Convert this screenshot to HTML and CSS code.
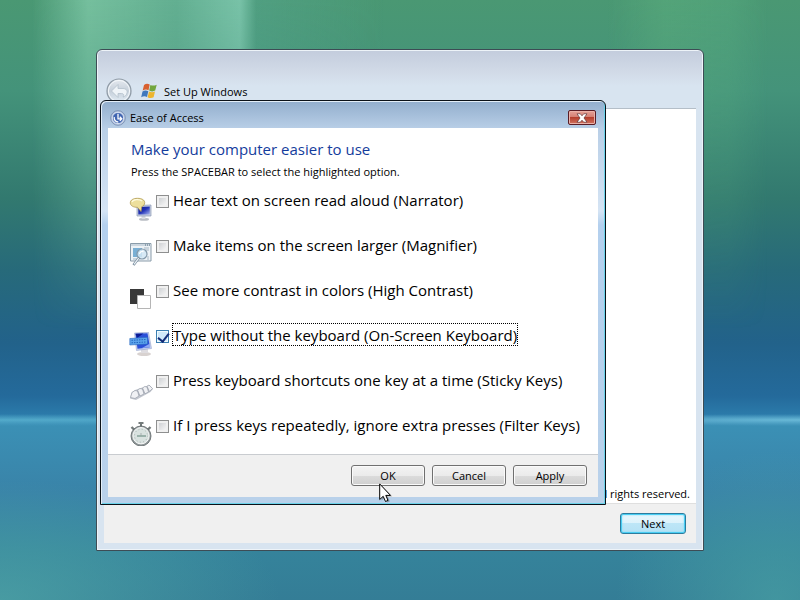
FILE: index.html
```html
<!DOCTYPE html>
<html lang="en">
<head>
    <meta charset="UTF-8">
    <title>Set Up Windows</title>
    <link rel="stylesheet" href="styles.css">
</head>
<body>
    <main class="desktop">
        <section class="setup">
            <header class="setup-header">
                <button type="button" class="back" aria-label="Back" disabled>
                    <svg viewBox="0 0 26 26" width="26" height="26">
                        <defs>
                            <linearGradient id="orb" x1="0" y1="0" x2="0" y2="1">
                                <stop offset="0" stop-color="#e6eaf0"/>
                                <stop offset=".5" stop-color="#c6d0da"/>
                                <stop offset="1" stop-color="#e4eef6"/>
                            </linearGradient>
                        </defs>
                        <circle cx="13" cy="13" r="12" fill="url(#orb)" stroke="#8f9ba6" stroke-width="1.2"/>
                        <circle cx="13" cy="13" r="10.6" fill="none" stroke="#f4f8fb" stroke-width="1"/>
                        <path d="M5.500 13l6.500-6.500v4h5c3.500 0 4.500 2.500 4 4.500-.6 2.500-2 3.500-4 4 1.500-2 .5-3.500-1.500-3.500H12v4z" fill="#eff4f8" stroke="#b3bfca" stroke-width=".8"/>
                    </svg>
                </button>
                <svg class="flag" viewBox="0 0 16 16" width="16" height="16">
                    <path d="M3 2C5 .3 7 .5 8.700 1.500L7.500 7.300C5.600 6.300 3.800 6.400 1.700 7.600z" fill="#d8602f"/>
                    <path d="M9.400 1.900c2 1 4 .9 6.300-.2l-1.500 5.900c-2 1.200-4 1-6-.1z" fill="#72a63e"/>
                    <path d="M1.500 8.400c2-1.200 4-1.200 5.800-.2L6 14C4.200 13 2.200 13 .2 14.300z" fill="#3f78bd"/>
                    <path d="M8 8.500c2 1 4 1.100 6 0l-1.400 5.800c-2 1.100-4 1.100-6-.1z" fill="#edb52f"/>
                </svg>
                <h1>Set Up Windows</h1>
            </header>
            <div class="setup-page">
                <p>All rights reserved.</p>
            </div>
            <footer class="setup-footer">
                <button type="button" class="btn btn-default">Next</button>
            </footer>
        </section>

        <form class="dialog">
            <header class="titlebar">
                <svg viewBox="0 0 16 16" width="16" height="16">
                    <circle cx="8" cy="8" r="7.300" fill="#bccbe4" stroke="#7186ab" stroke-width=".8"/>
                    <circle cx="8" cy="8" r="5.600" fill="#4165b1" stroke="#e4ecf8" stroke-width=".8"/>
                    <path d="M8 3.800v5h3.500M9.800 6.800l2 2-2 2M4.300 7a4 4 0 0 0 4 5" fill="none" stroke="#fff" stroke-width="1.300"/>
                </svg>
                <h2>Ease of Access</h2>
                <button type="button" class="close" aria-label="Close">
                    <svg viewBox="0 0 12 10" width="12" height="10">
                        <path d="M1 .8h3.300L6 2.800 7.700.8H11L8 5l3 4.200H7.700L6 7.200l-1.700 2H1L4 5z" fill="#fff" stroke="#5b3438" stroke-width=".7"/>
                    </svg>
                </button>
            </header>
            <div class="dialog-page">
                <h3>Make your computer easier to use</h3>
                <p>Press the SPACEBAR to select the highlighted option.</p>
                <ul class="options">
                    <li>
                        <svg viewBox="0 0 24 24" width="24" height="24">
                            <defs>
                                <linearGradient id="screen" x1="0" y1="0" x2="1" y2="1">
                                    <stop offset="0" stop-color="#101a8e"/>
                                    <stop offset=".5" stop-color="#2434b8"/>
                                    <stop offset="1" stop-color="#a9b6ee"/>
                                </linearGradient>
                            </defs>
                            <ellipse cx="15" cy="22.200" rx="5" ry="1.500" fill="#b9bdc4"/>
                            <path d="M12.500 18h4v4h-4z" fill="#d9dbe0"/>
                            <path d="M8 8.500l14-.5v11H8z" fill="#c8d0e0" stroke="#8b98b4" stroke-width=".7"/>
                            <path d="M9.300 10l11.500-.5v8H9.300z" fill="url(#screen)"/>
                            <path d="M8.500 1.300c4.500 0 7.200 1.800 7.200 4.400 0 2-1.200 3.200-3 4l-.7 4.800-3.500-4.200C4.200 10.400 1.300 8.600 1.300 5.800c0-2.800 3-4.500 7.200-4.500z" fill="#eddf9c" stroke="#b09a54" stroke-width=".8"/>
                            <path d="M3 5c1-2.500 7-3.500 10-1" fill="none" stroke="#fffbe0" stroke-width="1.200"/>
                        </svg>
                        <input type="checkbox" id="narrator">
                        <label for="narrator">Hear text on screen read aloud (Narrator)</label>
                    </li>
                    <li>
                        <svg viewBox="0 0 24 24" width="24" height="24">
                            <path d="M1.500 1.500h20.500v17.500H1.500z" fill="#edf2f6" stroke="#8a9caa"/>
                            <path d="M2 2h19.500v2H2z" fill="#cbd6df"/>
                            <path d="M16 3h1M18 3h1M20 3h1" stroke="#526c80"/>
                            <path d="M4 6h9v9H4z" fill="#79afd4"/>
                            <path d="M15 6h5M16 8h4M4 17h6M18 15h2M18 17h2" stroke="#a6b7c4"/>
                            <circle cx="13" cy="12" r="5" fill="#d2e8f5" fill-opacity=".85" stroke="#8499aa" stroke-width="1.200"/>
                            <path d="M10.500 12c.5-2 2-3 4-2.500" fill="none" stroke="#fff" stroke-width="1.300"/>
                            <path d="M10 15.800L4.500 23" stroke="#718698" stroke-width="2.500"/>
                            <path d="M9.700 16.200L5 22.400" stroke="#eef3f7" stroke-width="1.200"/>
                        </svg>
                        <input type="checkbox" id="magnifier">
                        <label for="magnifier">Make items on the screen larger (Magnifier)</label>
                    </li>
                    <li>
                        <svg viewBox="0 0 24 24" width="24" height="24">
                            <path d="M1 2h14v15H1z" fill="#393939"/>
                            <path d="M8.500 8.500h13v13h-13z" fill="#fff" stroke="#b5b5b5"/>
                        </svg>
                        <input type="checkbox" id="contrast">
                        <label for="contrast">See more contrast in colors (High Contrast)</label>
                    </li>
                    <li>
                        <svg viewBox="0 0 24 24" width="24" height="24">
                            <ellipse cx="15" cy="22" rx="7" ry="2" fill="#d8d2d0"/>
                            <path d="M12 17h7v4h-7z" fill="#dedce0"/>
                            <path d="M5.500 1L19.500.3l3 16.200-15 2z" fill="#c1cced" stroke="#9aa8cf" stroke-width=".6"/>
                            <path d="M6.500 1.800l12-.5 2.500 14-12.500 1.500z" fill="#2b50d8"/>
                            <path d="M6.500 1.800l8-.3L8 6z" fill="#0b1b94"/>
                            <path d="M.8 6.500L18.500 5.300V12l-17.700 1z" fill="#5ca4ec" stroke="#2667bd" stroke-width=".6"/>
                            <path d="M2.500 8.300l14.500-.8M2.500 10.800l14.500-.8" stroke="#2466c0" stroke-dasharray="1.500 1"/>
                            <path d="M13 16l8-4.500v3.700z" fill="#8ea9f3"/>
                        </svg>
                        <input type="checkbox" id="osk" checked>
                        <label for="osk" class="focused">Type without the keyboard (On-Screen Keyboard)</label>
                    </li>
                    <li>
                        <svg viewBox="0 0 24 24" width="24" height="24">
                            <path d="M1 21.500l1.500-6L6 13l14.500-5 3.500 4-2.500 3L7 23z" fill="#c3c7cf"/>
                            <path d="M3 15.500l3-2 2.500.5 1.500 5-4 2.500-4.500-1zM8.500 13l2.500-1.500 2.500.5 1.500 5-4 2zM13.500 11l2.300-1.500 2.200.5 1.500 5-3.500 1.800zM18 9.300l2-1.300 3.500 3.500-3 3z" fill="#f0f1f4" stroke="#9a9fab" stroke-width=".7"/>
                        </svg>
                        <input type="checkbox" id="sticky">
                        <label for="sticky">Press keyboard shortcuts one key at a time (Sticky Keys)</label>
                    </li>
                    <li>
                        <svg viewBox="0 0 24 24" width="24" height="24">
                            <path d="M2.500 5l2.500 2.500M21.500 5L19 7.500" stroke="#747b7b" stroke-width="2.400"/>
                            <path d="M9.500 1h5M12 1v4" stroke="#747b7b" stroke-width="2"/>
                            <circle cx="12" cy="14" r="10" fill="#90989a" stroke="#5d6566" stroke-width=".8"/>
                            <circle cx="12" cy="13.700" r="8.200" fill="#d9e2e0" stroke="#f8f8f8"/>
                            <circle cx="12" cy="13.700" r="6.500" fill="none" stroke="#a9b4b2" stroke-dasharray="1 2.400"/>
                            <path d="M8 14h9" stroke="#5d8277"/>
                            <path d="M12 14v-3" stroke="#9aa5a3" stroke-width=".8"/>
                        </svg>
                        <input type="checkbox" id="filter">
                        <label for="filter">If I press keys repeatedly, ignore extra presses (Filter Keys)</label>
                    </li>
                </ul>
            </div>
            <footer class="dialog-footer">
                <button type="button" class="btn">OK</button>
                <button type="button" class="btn">Cancel</button>
                <button type="button" class="btn">Apply</button>
            </footer>
        </form>

        <svg class="cursor" viewBox="0 0 14 21" width="14" height="21">
            <path d="M2.500 2.500v15l3.500-3 2.300 5 2.500-1-2-5h4.500z" fill="#000" opacity=".25"/>
            <path d="M.7.900v15.600l3.500-3.200 2.300 5.200 2.500-1.100-2.200-5h4.700z" fill="#fff" stroke="#000"/>
        </svg>
    </main>
</body>
</html>
```
FILE: styles.css
```css
* {
    box-sizing: border-box;
}

body {
    margin: 0;
    font-family: "Open Sans", "Noto Sans", sans-serif;
    font-size: 11px;
    color: #000;
}

h1, h2, h3, p, ul {
    margin: 0;
    padding: 0;
    font-size: 11px;
    font-weight: normal;
}

svg {
    display: block;
    flex: none;
}

.desktop {
    position: relative;
    display: grid;
    place-items: center;
    min-height: 100vh;
    background:
        radial-gradient(ellipse 70% 1% at 0 70%, rgba(100, 190, 215, 0.7), transparent),
        radial-gradient(ellipse 40% 1% at 100% 70%, rgba(120, 200, 225, 0.8), transparent),
        radial-gradient(ellipse 35% 20% at 0 100%, rgba(85, 175, 170, 0.6), transparent),
        radial-gradient(ellipse 20% 25% at 97% 100%, rgba(75, 165, 165, 0.6), transparent),
        linear-gradient(#4a9873 0, #44937a 15%, #32796f 33%, #276a7a 45%, #22628a 57%, #246a9b 66%, #2d7fae 70%, #3b90b5 71%, #3983a8 82%, #35839b 92%, #347d96 100%);
}

/* vertical light beams in the upper part of the wallpaper */
.desktop::before {
    content: "";
    position: absolute;
    inset: 0 0 45%;
    background: linear-gradient(90deg, transparent 4%, rgba(140, 212, 180, 0.65) 11%, rgba(115, 190, 165, 0.6) 22%, rgba(140, 212, 190, 0.7) 30%, rgba(90, 170, 150, 0.4) 32%, transparent 48%, transparent 76%, rgba(95, 178, 128, 0.45) 83%, rgba(90, 175, 130, 0.4) 91%, transparent 96%);
    mask-image: linear-gradient(#000, rgba(0, 0, 0, 0.5) 50%, transparent);
}

.setup {
    position: relative;
    display: flex;
    flex-direction: column;
    width: 76%;
    min-height: 502px;
    padding: 0 7px 7px;
    border: 1px solid #3d4c55;
    border-radius: 6px 6px 1px 1px;
    background: linear-gradient(#c3ccdc 0, #d0d9e6 20px, #d8e4f0 36px, #d8e4f0 100%);
    box-shadow: inset 0 0 0 1px #edf3f8;
}

.setup-header {
    display: flex;
    align-items: center;
    gap: 7px;
    height: 58px;
    padding: 24px 0 0 2px;
}

.back {
    padding: 0;
    border: 0;
    background: none;
}

.flag {
    margin-left: 2px;
}

.setup-page {
    display: flex;
    flex: 1;
    align-items: flex-end;
    justify-content: flex-end;
    padding: 0 6px 0 0;
    background: #fff;
    border-top: 1px solid #b4bec8;
    line-height: 18px;
}

.setup-footer {
    display: flex;
    justify-content: flex-end;
    padding: 9px 10px;
    border-top: 1px solid #dfdfdf;
    background: #f0f0f0;
}

.btn {
    width: 74px;
    height: 21px;
    padding: 0;
    border: 1px solid #707070;
    border-radius: 3px;
    background: linear-gradient(#f3f3f3, #ebebeb 50%, #dcdcdc 50%, #cfcfcf);
    box-shadow: inset 0 0 0 1px #fafafa;
    font-family: inherit;
    font-size: 11px;
    line-height: 17px;
    color: #000;
}

.btn-default {
    width: 66px;
    border-color: #2c7c9e;
    background: linear-gradient(#e9f7fd, #dcf2fb 50%, #bde6f7 50%, #b5e1f5);
    box-shadow: inset 0 0 0 1px #48cdf3, inset 0 0 2px 1px #7fdcf7;
}

.dialog {
    position: absolute;
    top: 100px;
    left: 100px;
    display: flex;
    flex-direction: column;
    width: 506px;
    padding: 0 7px 7px;
    border: 1px solid #0a1118;
    border-radius: 6px 6px 0 0;
    background: linear-gradient(#92aecd 0, #b9cfe7 28px, #d5e4f4 110px, #b4d0ee 124px, #b9d1ea 100%);
    box-shadow: inset 1px 1px 0 #e3eef8, inset -1px -1px 0 #6bd3ea;
}

.titlebar {
    display: flex;
    align-items: center;
    gap: 4px;
    height: 27px;
    padding: 6px 2px 0 2px;
}

.close {
    display: grid;
    place-items: center;
    width: 28px;
    height: 15px;
    margin-left: auto;
    padding: 0;
    border: 1px solid #591c25;
    border-radius: 2px;
    background: linear-gradient(#e6a298, #d37c70 50%, #b53f2e 50%, #d17360);
    box-shadow: inset 0 0 0 1px #eab1a8;
}

.dialog-page {
    padding: 11px 16px 5px 21px;
    background: #fff;
}

.dialog-page h3 {
    padding-left: 2px;
    font-size: 15px;
    line-height: 20px;
    color: #143c9c;
}

.dialog-page p {
    padding: 4px 0 0 2px;
    line-height: 18px;
}

.options {
    display: grid;
    gap: 10px;
    padding-top: 8px;
    list-style: none;
}

.options li {
    display: flex;
    gap: 3px;
    height: 35px;
}

.options svg {
    margin-top: 8px;
}

.options input {
    appearance: none;
    width: 13px;
    height: 13px;
    margin: 6px 0 0;
    border: 1px solid #8e8f8f;
    background: linear-gradient(135deg, #c5c8cc, #f4f4f4 80%);
    box-shadow: inset 0 0 0 2px #f0f0f0;
}

.options input:checked {
    border-color: #3c7fb1;
    background: #cfe9fa;
    box-shadow: inset 0 0 0 1px #effafe;
}

.options input:checked::before {
    content: "";
    display: block;
    width: 5px;
    height: 9px;
    margin-left: 3px;
    border: solid #122c78;
    border-width: 0 2px 2px 0;
    transform: rotate(38deg);
}

.options label {
    height: 22px;
    margin-left: 1px;
    font-size: 15px;
    line-height: 22px;
    white-space: nowrap;
}

.options .focused {
    height: 21px;
    outline: 1px dotted #000;
}

.dialog-footer {
    display: flex;
    justify-content: flex-end;
    gap: 7px;
    padding: 10px 11px 11px;
    border-top: 1px solid #c9ccd0;
    background: #f0f0f0;
}

.cursor {
    position: absolute;
    top: 483px;
    left: 379px;
}
```
